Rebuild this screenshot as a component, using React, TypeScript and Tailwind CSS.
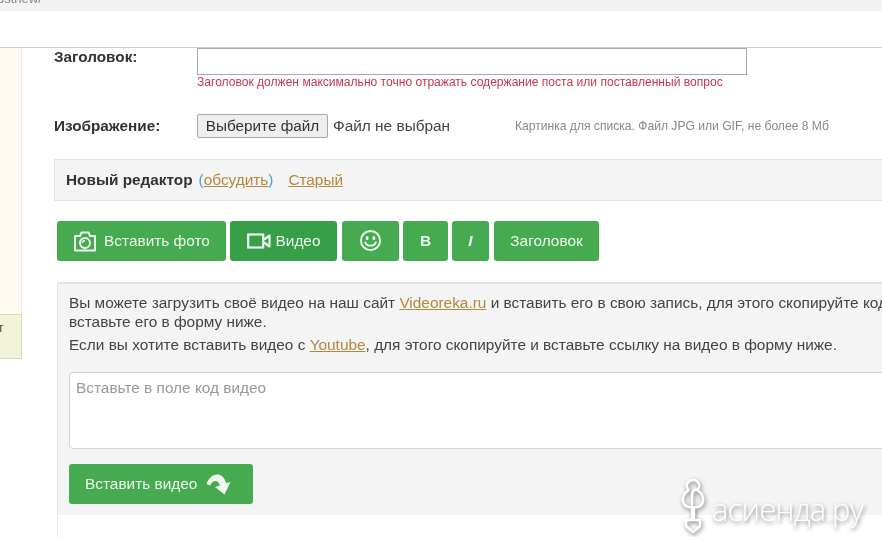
const font = "font-['Liberation_Sans',Arial,sans-serif]";
const linkClass = "text-[#b5883f] underline";

function GreenButton({ className, children }: { className: string; children: React.ReactNode }) {
  return (
    <button className={`flex h-10 items-center justify-center rounded-[3px] pb-[1px] text-[15.4px] text-[#eef8ee] ${className}`}>
      {children}
    </button>
  );
}

export default function App() {
  return (
    <div className={`relative h-[537px] w-[882px] overflow-hidden bg-white blur-[0.4px] ${font}`}>
      {/* address bar remainder */}
      <div className="h-[11px] overflow-hidden bg-[#f0f2f4]">
        <div className="mt-[-9px] ml-[-3px] text-[13px] leading-[15px] text-[#888]">osthew/</div>
      </div>
      <div className="h-[36px] border-b border-[#d0d0d0] box-content" />

      <div className="flex">
        {/* sidebar edge */}
        <aside className="w-[22px] shrink-0">
          <div className="h-[266px] border-r border-[#ece9d8] bg-[#fffbf0]" />
          <div className="h-[45px] overflow-hidden border-y border-r border-[#d9d9bd] bg-[#f3f3da] pt-[7px] text-[12px] leading-[13px] text-[#444]">
            <span className="ml-[-2px] block">т</span>
          </div>
        </aside>

        <main className="ml-[32px] w-[900px] shrink-0">
          {/* title row */}
          <div className="flex">
            <label className="w-[143px] text-[15.3px] leading-[18px] font-bold text-[#333]">Заголовок:</label>
            <div>
              <input className="block h-[27px] w-[550px] border border-[#a9a9a9] bg-white" />
              <p className="text-[12.07px] leading-[14px] text-[#c7374a]">
                Заголовок должен максимально точно отражать содержание поста или поставленный вопрос
              </p>
            </div>
          </div>

          {/* image row */}
          <div className="mt-[25px] flex items-center">
            <label className="w-[143px] text-[15.3px] font-bold text-[#333]">Изображение:</label>
            <button className="h-[24px] w-[131px] rounded-[2px] border border-[#a9a9a9] bg-[#eeeeee] text-[15.3px] text-[#333]">
              Выберите файл
            </button>
            <span className="ml-[5px] w-[182px] text-[15.4px] text-[#444]">Файл не выбран</span>
            <span className="text-[12.1px] text-[#888]">Картинка для списка. Файл JPG или GIF, не более 8 Мб</span>
          </div>

          {/* editor switch */}
          <div className="mt-[21px] flex h-[42px] items-center border border-[#e2e2e2] bg-[#f4f4f4] pl-[11px] text-[15.35px]">
            <b className="text-[#333]">Новый редактор</b>
            <span className="ml-[6px] text-[#4aa3d4]">
              (<span className={linkClass}>обсудить</span>)
            </span>
            <span className={`ml-[15px] ${linkClass}`}>Старый</span>
          </div>

          {/* toolbar */}
          <div className="mt-[20px] flex gap-[4px] pl-[3px]">
            <GreenButton className="w-[169px] gap-[7px] bg-[#46ab50]">
              <svg viewBox="0 0 24 22" className="h-[22px] w-[24px]" fill="none" stroke="currentColor" strokeWidth="2">
                <path d="M2 6 H7 L8.5 2.5 H15.5 L17 6 H22 V20.5 H2 Z" strokeLinejoin="round" />
                <circle cx="12" cy="13" r="5" />
                <path d="M9.5 13 A2.5 2.5 0 0 1 12 10.5" strokeWidth="1.3" />
              </svg>
              Вставить фото
            </GreenButton>
            <GreenButton className="w-[107px] gap-[5px] bg-[#389f49]">
              <svg viewBox="0 0 24 16" className="h-[16px] w-[24px]" fill="none" stroke="currentColor" strokeWidth="2.2">
                <rect x="1.2" y="1.5" width="15" height="13" />
                <path d="M17 6.5 L22.5 2.5 V13.5 L17 9.5" strokeLinejoin="round" />
              </svg>
              Видео
            </GreenButton>
            <GreenButton className="ml-[1px] w-[57px] bg-[#46ab50]">
              <svg viewBox="0 0 24 24" className="h-[23px] w-[23px]" fill="none" stroke="currentColor" strokeWidth="2">
                <circle cx="12" cy="12" r="10" />
                <ellipse cx="8.5" cy="9.5" rx="1.5" ry="2.2" fill="currentColor" stroke="none" />
                <ellipse cx="15.5" cy="9.5" rx="1.5" ry="2.2" fill="currentColor" stroke="none" />
                <path d="M6.5 14 C8 18.5 16 18.5 17.5 14" strokeLinecap="round" />
              </svg>
            </GreenButton>
            <GreenButton className="w-[45px] bg-[#46ab50] font-bold">B</GreenButton>
            <GreenButton className="w-[37px] bg-[#46ab50] font-bold italic">I</GreenButton>
            <GreenButton className="ml-[1px] w-[105px] bg-[#46ab50]">Заголовок</GreenButton>
          </div>

          {/* video panel */}
          <div className="mt-[21px] ml-[3px] h-[233px] border-t-2 border-l border-[#e2e2e2] bg-[#f4f4f4] pt-[9px] pl-[11px] text-[15.4px] leading-[19px] text-[#444]">
            <p className="whitespace-nowrap">
              Вы можете загрузить своё видео на наш сайт <span className={linkClass}>Videoreka.ru</span> и вставить его в свою запись, для этого скопируйте код и
              <br />
              вставьте его в форму ниже.
            </p>
            <p className="mt-[4px] whitespace-nowrap">
              Если вы хотите вставить видео с <span className={linkClass}>Youtube</span>, для этого скопируйте и вставьте ссылку на видео в форму ниже.
            </p>
            <div className="mt-[18px] h-[77px] w-[900px] rounded-[4px] border border-[#d4d4d4] bg-white px-[6px] py-[5px] text-[#999]">
              Вставьте в поле код видео
            </div>
            <GreenButton className="mt-[15px] w-[184px] justify-start gap-[9px] bg-[#46ab50] pl-[16px]">
              Вставить видео
              <svg viewBox="0 0 25 22" className="h-[22px] w-[25px]" fill="currentColor">
                <path d="M0.5 11 C3 4 8 1 12 1.5 C16.5 2 19 6 20 10 L24.5 9 L18.5 21.5 L9 14 L14 12.5 C13 9.5 11.5 8 9.5 8 C7 8 5.5 10 4 12.5 Z" />
              </svg>
            </GreenButton>
          </div>
          <div className="ml-[3px] h-[40px] border-l border-[#eeeeee] bg-white" />
        </main>
      </div>

      {/* site watermark */}
      <div className="absolute top-[478px] left-[681px] flex items-center gap-[7px] text-white drop-shadow-[1px_2px_2px_rgba(0,0,0,0.5)]">
        <svg viewBox="0 0 24 56" className="h-[56px] w-[24px]" fill="none" stroke="currentColor" strokeWidth="2.4" strokeLinejoin="round">
          <path d="M8 12 C3 8 7 2 12 2 C17 2 21 8 16 12" />
          <path d="M8 12 C1 16 0 24 5 28 C8 30 16 30 19 28 C24 24 23 16 16 12 C13 10 11 14 11 18 V42" />
          <path d="M13 30 V42 M5 42 H19 V48 L12 54 L5 48 Z" />
        </svg>
        <span className="mt-[6px] font-['Open_Sans',sans-serif] text-[31px] leading-[36px] font-light tracking-[-0.8px]">асиенда.ру</span>
      </div>
    </div>
  );
}
